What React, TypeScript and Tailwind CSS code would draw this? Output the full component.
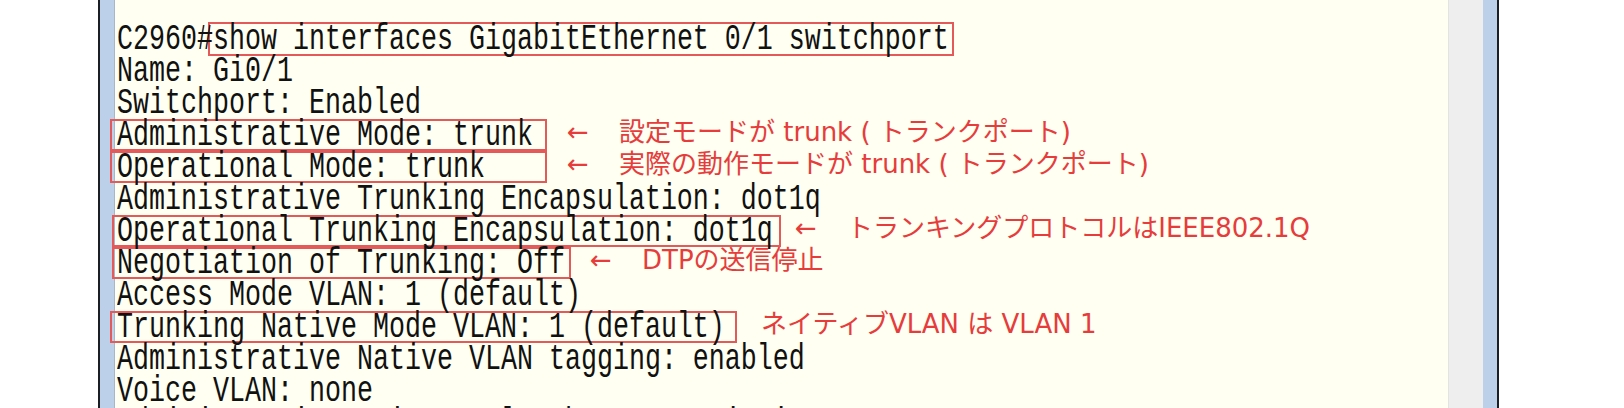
import type { ReactNode } from 'react'

const mono = "font-['Liberation_Mono',monospace] text-[26.67px] text-[#111]"
const note = "font-['DejaVu_Sans','Noto_Sans_CJK_JP',sans-serif] text-[26px] leading-8 text-[#e63c3c]"

// terminal glyphs in the capture are tall and narrow, so stretch them vertically
function T({ children }: { children: ReactNode }) {
   return <span className="inline-block scale-y-[1.4] leading-[22px]">{children}</span>
}

function Line({ children }: { children: ReactNode }) {
   return <div className="flex h-8 items-center whitespace-pre">{children}</div>
}

function Note({ gap, arrow = true, children }: { gap: string; arrow?: boolean; children: ReactNode }) {
   return (
      <span className={`${note} ${gap} -mt-[6px] flex items-center`}>
         {arrow && <span className="w-[52px]">←</span>}
         {children}
      </span>
   )
}

export default function App() {
   return (
      <div className="flex h-[408px] w-[1624px] overflow-hidden bg-white">
         <div className="w-[98px] shrink-0" />
         <div className="flex w-[1401px] shrink-0 border-x-2 border-[#1b1f24]">
            <div className="w-[15px] shrink-0 border-r border-[#a7b6c8] bg-[#bdd0e9]" />

            <div className={`${mono} flex-1 bg-[#fffff2] pl-[2px] pt-[23px]`}>
               <Line>
                  <T>C2960#</T>
                  <span className="-ml-[5px] flex h-[34px] w-[746px] items-center border-2 border-[#e45a5a] pl-[3px]">
                     <T>show interfaces GigabitEthernet 0/1 switchport</T>
                  </span>
               </Line>
               <Line>
                  <T>Name: Gi0/1</T>
               </Line>
               <Line>
                  <T>Switchport: Enabled</T>
               </Line>
               <Line>
                  <span className="-ml-[7px] flex h-8 w-[437px] items-center border-2 border-[#e45a5a] pl-[5px]">
                     <T>Administrative Mode: trunk</T>
                  </span>
                  <Note gap="ml-[20px]">設定モードが trunk ( トランクポート)</Note>
               </Line>
               <Line>
                  <span className="-ml-[7px] flex h-8 w-[437px] items-center border-2 border-[#e45a5a] pl-[5px]">
                     <T>Operational Mode: trunk</T>
                  </span>
                  <Note gap="ml-[20px]">実際の動作モードが trunk ( トランクポート)</Note>
               </Line>
               <Line>
                  <T>Administrative Trunking Encapsulation: dot1q</T>
               </Line>
               <Line>
                  <span className="-ml-[5px] flex h-8 w-[669px] items-center border-2 border-[#e45a5a] pl-[3px]">
                     <T>Operational Trunking Encapsulation: dot1q</T>
                  </span>
                  <Note gap="ml-[14px]">トランキングプロトコルはIEEE802.1Q</Note>
               </Line>
               <Line>
                  <span className="-ml-[5px] flex h-8 w-[459px] items-center border-2 border-[#e45a5a] pl-[3px]">
                     <T>Negotiation of Trunking: Off</T>
                  </span>
                  <Note gap="ml-[19px]">DTPの送信停止</Note>
               </Line>
               <Line>
                  <T>Access Mode VLAN: 1 (default)</T>
               </Line>
               <Line>
                  <span className="-ml-[7px] flex h-8 w-[627px] items-center border-2 border-[#e45a5a] pl-[5px]">
                     <T>Trunking Native Mode VLAN: 1 (default)</T>
                  </span>
                  <Note gap="ml-[24px]" arrow={false}>ネイティブVLAN は VLAN 1</Note>
               </Line>
               <Line>
                  <T>Administrative Native VLAN tagging: enabled</T>
               </Line>
               <Line>
                  <T>Voice VLAN: none</T>
               </Line>
               <Line>
                  <T>Administrative private-vlan host-association: none</T>
               </Line>
            </div>

            <div className="w-[35px] shrink-0 border-l border-[#e3e3e3] bg-[#eeeeee]" />
            <div className="w-[14px] shrink-0 bg-[#bdd0e9]" />
         </div>
      </div>
   )
}
